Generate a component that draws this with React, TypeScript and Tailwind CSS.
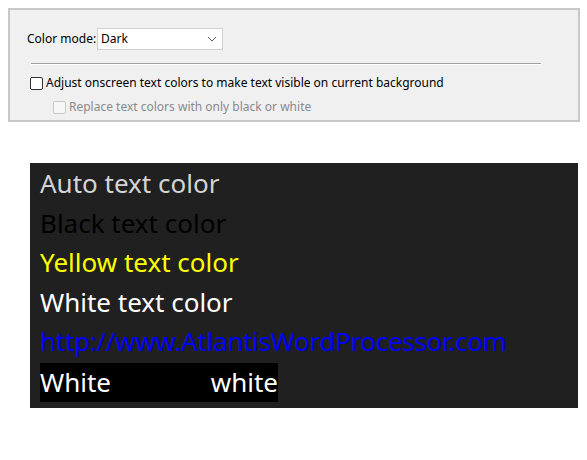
export default function App() {
  return (
    <div className="w-[587px] h-[460px] bg-white relative" style={{ fontFamily: '"Noto Sans", sans-serif' }}>
      <div className="pt-[8px] pl-[8px]">
        <div className="w-[572px] h-[114px] border-2 border-[#c8c8c8] bg-[#f0f0f0] pl-[17px] pt-[18px] text-[12px] text-black">
          <div className="flex items-center">
            <span className="w-[70px]">Color mode:</span>
            <div className="w-[126px] h-[22px] bg-white border border-[#d0d0d0] flex items-center justify-between px-[3px]">
              <span>Dark</span>
              <svg width="10" height="6" viewBox="0 0 10 6" className="mr-[2px]"><path d="M1 1l4 4 4-4" fill="none" stroke="#555" strokeWidth="1" /></svg>
            </div>
          </div>
          <div className="ml-[4px] mt-[13px] w-[510px] border-t border-[#a0a0a0] border-b-white border-b h-0"></div>
          <div className="flex items-center mt-[9px] ml-[3px] gap-[3px]">
            <span className="w-[13px] h-[13px] border border-[#333] rounded-[2px] bg-white"></span>
            <span>Adjust onscreen text colors to make text visible on current background</span>
          </div>
          <div className="flex items-center mt-[6px] ml-[26px] gap-[3px] text-[#8a8a8a]">
            <span className="w-[13px] h-[13px] border border-[#c8c8c8] rounded-[2px] bg-[#f7f7f7]"></span>
            <span>Replace text colors with only black or white</span>
          </div>
        </div>
      </div>
      <div className="ml-[30px] mt-[41px] w-[548px] h-[245px] bg-[#202020] pl-[10px] pt-[1px] text-[26px] leading-[39.5px] whitespace-nowrap overflow-hidden">
        <div className="text-[#d4d4d4]">Auto text color</div>
        <div className="text-black">Black text color</div>
        <div className="text-[#ffff00]">Yellow text color</div>
        <div className="text-white">White text color</div>
        <div className="text-[#0000ff] tracking-[-0.3px]">http://www.AtlantisWordProcessor.com</div>
        <div className="inline-flex w-[238px] justify-between bg-black text-white mt-[1px]">
          <span>White</span>
          <span>white</span>
        </div>
      </div>
    </div>
  );
}
